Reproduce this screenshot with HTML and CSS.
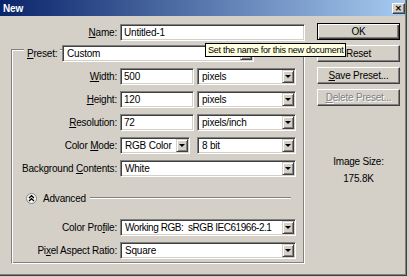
FILE: index.html
```html
<!DOCTYPE html>
<html>
<head>
    <link rel="stylesheet" href="styles.css">
</head>
<body>
    <div class="window">
        <div class="titlebar">
            <span class="title">New</span>
            <span class="close">&#x2715;</span>
        </div>
        <div class="content">
            <div class="main">
                <div class="name-row">
                    <label><u>N</u>ame:</label>
                    <input type="text" class="field name-field" value="Untitled-1">
                </div>
                <div class="group">
                    <div class="preset-row">
                        <label><u>P</u>reset:</label>
                        <div class="select preset-select"><span>Custom</span><i class="drop"></i></div>
                    </div>
                    <div class="row">
                        <label><u>W</u>idth:</label>
                        <input type="text" class="field num-field" value="500">
                        <div class="select unit-select"><span>pixels</span><i class="drop"></i></div>
                    </div>
                    <div class="row">
                        <label><u>H</u>eight:</label>
                        <input type="text" class="field num-field" value="120">
                        <div class="select unit-select"><span>pixels</span><i class="drop"></i></div>
                    </div>
                    <div class="row">
                        <label><u>R</u>esolution:</label>
                        <input type="text" class="field num-field" value="72">
                        <div class="select unit-select"><span>pixels/inch</span><i class="drop"></i></div>
                    </div>
                    <div class="row">
                        <label>Color <u>M</u>ode:</label>
                        <div class="select mode-select"><span>RGB Color</span><i class="drop"></i></div>
                        <div class="select unit-select"><span>8 bit</span><i class="drop"></i></div>
                    </div>
                    <div class="row">
                        <label>Background <u>C</u>ontents:</label>
                        <div class="select full-select"><span>White</span><i class="drop"></i></div>
                    </div>
                    <div class="advanced-row">
                        <svg class="adv-icon" width="11" height="11" viewBox="0 0 11 11">
                            <circle cx="5.5" cy="5.5" r="5" fill="#f6f5f1" stroke="#8a8780"/>
                            <polyline points="3,5 5.5,2.7 8,5" fill="none" stroke="#000" stroke-width="1.3"/>
                            <polyline points="3,8 5.5,5.7 8,8" fill="none" stroke="#000" stroke-width="1.3"/>
                        </svg>
                        <span>Advanced</span>
                        <div class="etched-line"></div>
                    </div>
                    <div class="row">
                        <label>Color Pro<u>f</u>ile:</label>
                        <div class="select full-select"><span class="tight">Working RGB:&nbsp; sRGB IEC61966-2.1</span><i class="drop"></i></div>
                    </div>
                    <div class="row">
                        <label>Pi<u>x</u>el Aspect Ratio:</label>
                        <div class="select full-select"><span>Square</span><i class="drop"></i></div>
                    </div>
                </div>
            </div>
            <div class="side">
                <button class="btn default">OK</button>
                <button class="btn">Reset</button>
                <button class="btn"><u>S</u>ave Preset...</button>
                <button class="btn disabled"><u>D</u>elete Preset...</button>
                <div class="image-size">
                    <div>Image Size:</div>
                    <div>175.8K</div>
                </div>
            </div>
        </div>
        <div class="tooltip">Set the name for this new document</div>
    </div>
</body>
</html>
```

FILE: styles.css
```css
* {
    box-sizing: border-box;
}
body {
    margin: 0;
    background-color: #d4d0c8;
    font-family: "Liberation Sans", Arial, sans-serif;
    font-size: 10px;
    letter-spacing: -0.2px;
    color: #000;
}
.window {
    position: relative;
    width: 407px;
    height: 276px;
    background-color: #d4d0c8;
    border-right: 1px solid #404040;
    border-bottom: 1px solid #404040;
    box-shadow: inset -1px -1px #808080;
}
.titlebar {
    height: 16px;
    margin-right: 1px;
    display: flex;
    align-items: center;
    justify-content: space-between;
    padding: 0 0 0 3px;
    background: linear-gradient(to right, #0a246a, #a6caf0);
    color: #fff;
}
.title {
    font-weight: bold;
    font-size: 10px;
}
.close {
    width: 13px;
    height: 11px;
    display: flex;
    align-items: center;
    justify-content: center;
    background-color: #d4d0c8;
    color: #000;
    font-size: 8px;
    font-weight: bold;
    border: 1px solid;
    border-color: #fff #404040 #404040 #fff;
    box-shadow: inset -1px -1px #808080;
}
.content {
    display: flex;
    padding-top: 8px;
}
.main {
    width: 305px;
}
label {
    white-space: nowrap;
}
.name-row {
    display: flex;
    align-items: center;
    height: 17px;
}
.name-row label {
    width: 117px;
    text-align: right;
    margin-right: 3px;
}
/* sunken win classic field */
.field,
.select {
    height: 17px;
    border: 1px solid;
    border-color: #808080 #fff #fff #808080;
    box-shadow: inset 1px 1px #404040, inset -1px -1px #d4d0c8;
    background-color: #fff;
    font-family: inherit;
    font-size: 10px;
    letter-spacing: -0.2px;
    color: #000;
}
.field {
    padding: 0 0 0 3px;
    margin: 0;
    outline: none;
}
.name-field { width: 185px; }
.num-field { width: 74px; margin-right: 3px; }
.select {
    display: flex;
    align-items: center;
    padding: 0 1px 0 4px;
}
.select span {
    flex: 1;
    white-space: nowrap;
    overflow: hidden;
}
.select .tight {
    letter-spacing: -0.45px;
}
.drop {
    width: 12px;
    height: 13px;
    display: flex;
    align-items: center;
    justify-content: center;
    background-color: #d4d0c8;
    border: 1px solid;
    border-color: #d4d0c8 #404040 #404040 #d4d0c8;
    box-shadow: inset 1px 1px #fff, inset -1px -1px #808080;
}
.drop::after {
    content: "";
    border-left: 3px solid transparent;
    border-right: 3px solid transparent;
    border-top: 3px solid #000;
}
.preset-select { width: 192px; }
.unit-select { width: 99px; }
.mode-select { width: 70px; margin-right: 7px; }
.full-select { width: 176px; }
.group {
    margin: 8px 0 0 11px;
    width: 294px;
    height: 215px;
    border: 1px solid;
    border-color: #808080 #fff #fff #808080;
    box-shadow: inset 1px 1px #fff, inset -1px -1px #808080;
    display: flex;
    flex-direction: column;
    gap: 6px;
}
.preset-row {
    display: flex;
    align-items: center;
    margin-top: -5px;
    padding-left: 12px;
}
.preset-row label {
    width: 36px;
    padding-left: 3px;
    margin-right: 2px;
    background-color: #d4d0c8;
    line-height: 17px;
}
.row {
    display: flex;
    align-items: center;
}
.row label {
    width: 105px;
    text-align: right;
    margin-right: 3px;
}
.advanced-row {
    display: flex;
    align-items: center;
    height: 30px;
    padding-left: 14px;
}
.adv-icon {
    margin-right: 6px;
}
.etched-line {
    flex: 1;
    height: 2px;
    margin: 0 13px 0 4px;
    border-top: 1px solid #808080;
    border-bottom: 1px solid #fff;
}
.side {
    width: 83px;
    margin: -1px 0 0 12px;
    display: flex;
    flex-direction: column;
    gap: 5px;
}
.btn {
    height: 17px;
    padding: 0;
    background-color: #d4d0c8;
    font-family: inherit;
    font-size: 10px;
    letter-spacing: -0.2px;
    color: #000;
    border: 1px solid;
    border-color: #fff #404040 #404040 #fff;
    box-shadow: inset -1px -1px #808080;
}
.btn.default {
    border-color: #000;
    box-shadow: inset 1px 1px #fff, inset -1px -1px #404040, inset -2px -2px #808080;
}
.btn.disabled {
    color: #808080;
    text-shadow: 1px 1px #fff;
}
.image-size {
    margin-top: 42px;
    text-align: center;
    line-height: 17px;
}
.tooltip {
    position: absolute;
    left: 205px;
    top: 43px;
    width: 141px;
    height: 14px;
    padding-left: 2px;
    border: 1px solid #000;
    background-color: #ffffe1;
    font-size: 9px;
    line-height: 12px;
    letter-spacing: -0.25px;
    white-space: nowrap;
}
```
